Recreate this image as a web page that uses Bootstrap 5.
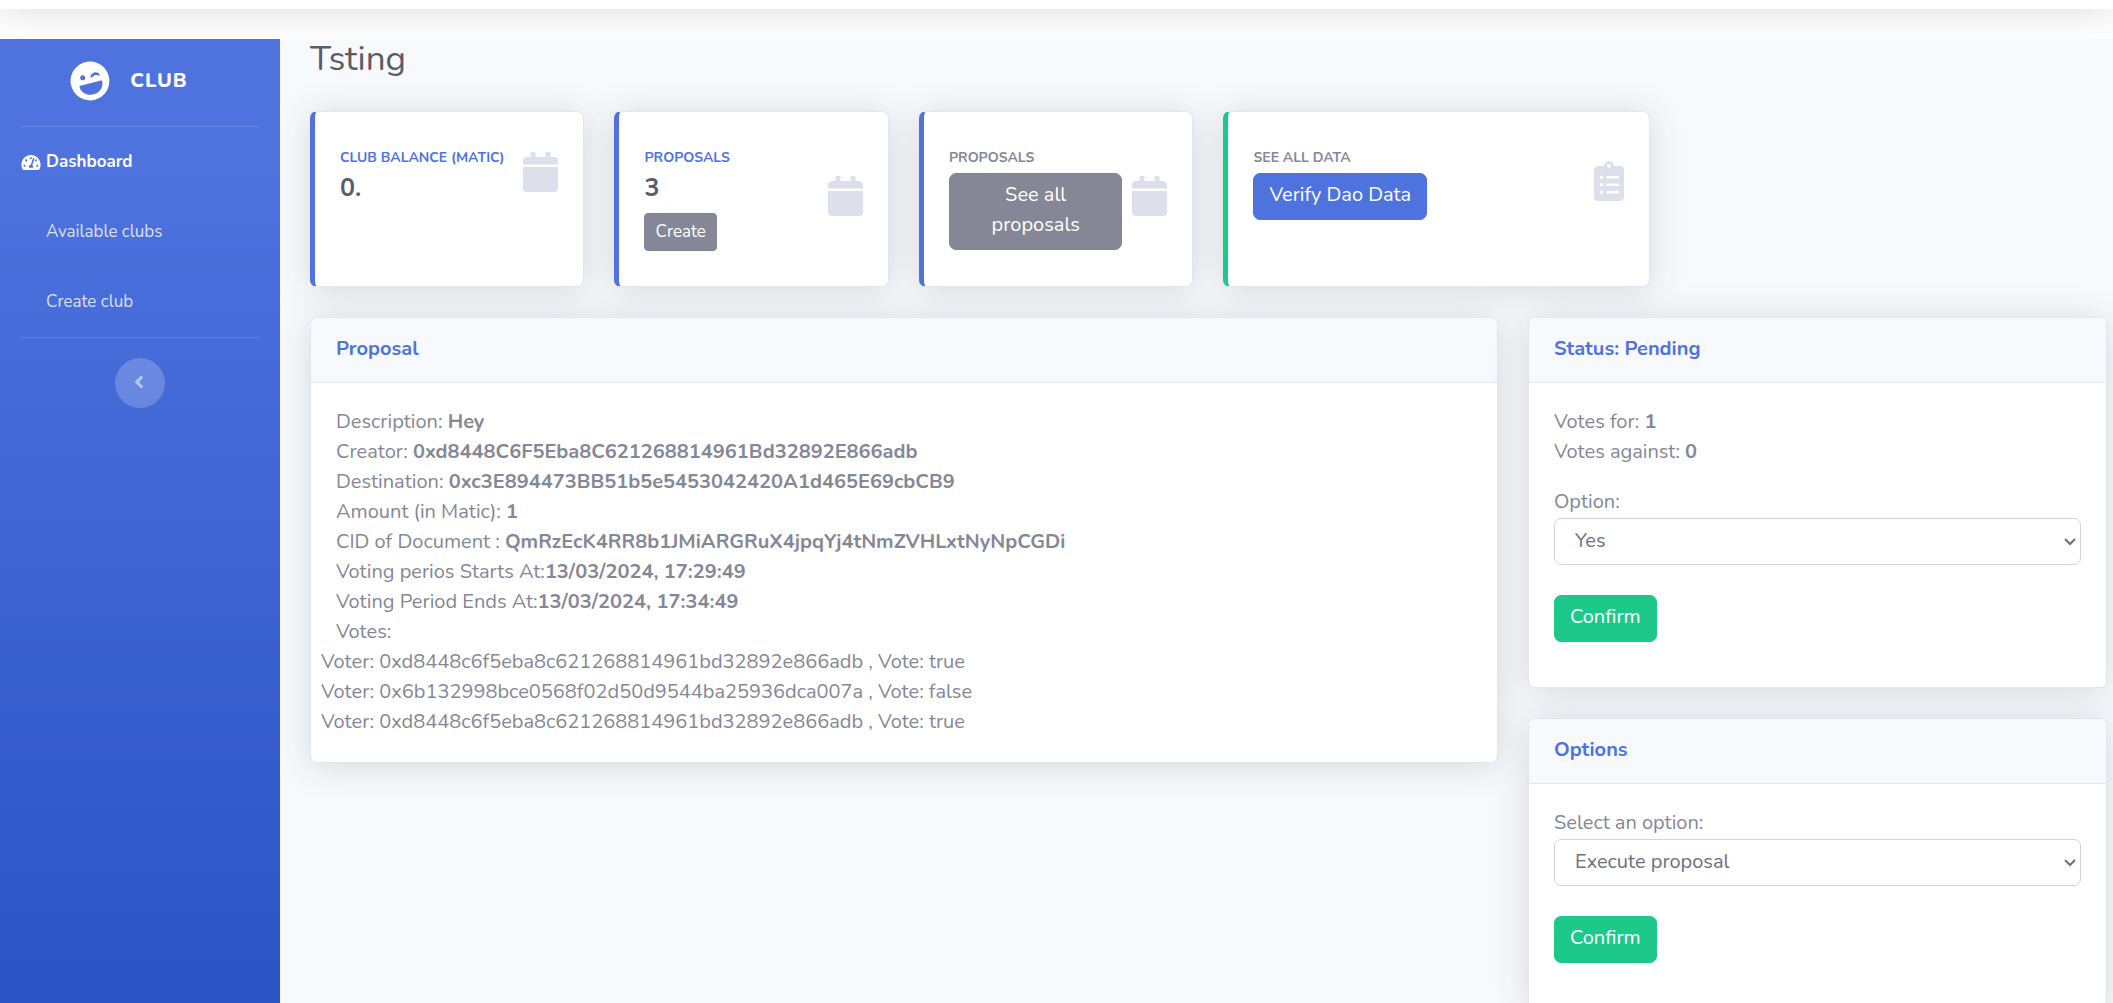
<!DOCTYPE html>
<html lang="en">
<head>
<meta charset="utf-8">
<meta name="viewport" content="width=device-width, initial-scale=1">
<title>Club - Proposal</title>
<link href="https://cdn.jsdelivr.net/npm/bootstrap@5.3.0/dist/css/bootstrap.min.css" rel="stylesheet">
<style>
:root { font-size: 20px; }
body { font-family: Nunito, Lato, "Open Sans", sans-serif; color: #858796; background: #fff; }
.soft-shadow { box-shadow: 0 3px 35px rgba(58, 59, 69, .17); }
.topbar { height: 87px; margin-top: -78px; background: #fff; flex: none; }
.page-wrap { background: #f8f9fc; min-height: 0; position: relative; }
.sidebar { width: 280px; flex: none; background: linear-gradient(180deg, #4e73df 10%, #224abe 100%); height: 1200px; }
.brand { height: 87px; padding: 0 2px 4px 0; color: #fff; font-weight: 800; letter-spacing: 1px; text-decoration: none; }
.brand svg { width: 40px; height: 40px; transform: rotate(-15deg); }
.divider { margin: 0 20px; border-top: 1px solid rgba(255, 255, 255, .15); opacity: 1; }
.side-link { display: flex; align-items: center; height: 70px; padding: 0 20px; font-size: 17px; color: rgba(255, 255, 255, .8); text-decoration: none; }
.side-link.active { color: #fff; font-weight: 700; }
.side-icon { width: 21px; margin-right: 5px; display: flex; justify-content: center; }
.side-icon svg { width: 20px; height: 17px; }
.toggler { width: 50px; height: 50px; border: 0; border-radius: 50%; background: rgba(255, 255, 255, .2); color: rgba(255, 255, 255, .5); padding: 0 2px 4px 0; }
.toggler svg { width: 10px; height: 20px; }
.content { min-width: 0; overflow: hidden; }
.content-inner { padding: 0 6px 0 30px; }
.page-title { font-size: 35px; line-height: 40px; margin-bottom: 32px; color: #5a5c69; font-weight: 400; }
.card { border-color: #e3e6f0; border-radius: 7px; color: inherit; }
.card-body { padding: 25px; }
.panel-body { padding: 24px 25px 25px; }
.card-header { padding: 19px 25px 21px; background: #f8f9fc; border-color: #e3e6f0; }
.card-header:first-child { border-radius: 6px 6px 0 0; }
.panel-title { font-size: 20px; line-height: 24px; font-weight: 700; color: #4e73df; margin: 0; }
.edge-blue { border-left: 5px solid #4e73df; }
.edge-green { border-left: 5px solid #1cc88a; }
.stat-label { font-size: 14px; line-height: 21px; font-weight: 700; text-transform: uppercase; }
.stat-value { font-size: 25px; line-height: 30px; font-weight: 700; color: #5a5c69; }
.text-blue { color: #4e73df; }
.stat-icon { color: #dddfeb; padding-bottom: 6px; }
.stat-icon svg { display: block; height: 40px; }
.btn { border-radius: 7px; padding: 6px 15px 9px; }
.btn-sm { border-radius: 4px; font-size: 17px; line-height: 26px; padding: 5px 10px; }
.btn-grey, .btn-grey:hover { background: #858796; border-color: #858796; color: #fff; }
.btn-blue, .btn-blue:hover { background: #4e73df; border-color: #4e73df; color: #fff; }
.btn-green, .btn-green:hover { background: #1cc88a; border-color: #1cc88a; color: #fff; }
.field-label { display: block; padding-bottom: 1px; }
select.form-control { height: 47px; border-color: #d1d3e2; border-radius: 7px; color: #6e707e; padding: 6px 25px 8px 20px;
  background: #fff url("data:image/svg+xml,%3Csvg xmlns='http://www.w3.org/2000/svg' viewBox='0 0 12 8'%3E%3Cpath d='M1 1l5 5 5-5' fill='none' stroke='%236e707e' stroke-width='2'/%3E%3C/svg%3E") no-repeat right 4px center / 12px 8px; }
.voters { margin-left: -15px; }
</style>
</head>
<body class="vh-100 overflow-hidden d-flex flex-column">
<svg class="d-none" xmlns="http://www.w3.org/2000/svg">
  <symbol id="i-calendar" viewBox="0 0 448 512"><path fill="currentColor" d="M12 192h424c6.600 0 12 5.400 12 12v260c0 26.500-21.500 48-48 48H48c-26.500 0-48-21.500-48-48V204c0-6.600 5.400-12 12-12zm436-44v-36c0-26.500-21.500-48-48-48h-48V12c0-6.600-5.400-12-12-12h-40c-6.600 0-12 5.400-12 12v52H160V12c0-6.600-5.400-12-12-12h-40c-6.600 0-12 5.400-12 12v52H48C21.500 64 0 85.500 0 112v36c0 6.600 5.400 12 12 12h424c6.600 0 12-5.400 12-12z"/></symbol>
</svg>

<nav class="topbar soft-shadow mb-4" aria-label="Top bar"></nav>

<div class="page-wrap d-flex flex-grow-1 overflow-hidden">
  <aside class="sidebar">
    <a class="brand d-flex align-items-center justify-content-center" href="#">
      <svg viewBox="0 0 496 512"><path fill="currentColor" d="M248 8C111 8 0 119 0 256s111 248 248 248 248-111 248-248S385 8 248 8zm20.100 198.100c4-25.200 34.200-42.100 59.900-42.100s55.900 16.900 59.900 42.100c1.700 11.100-11.400 18.300-19.800 10.800l-9.500-8.500c-14.800-13.200-46.200-13.200-61 0L288 217c-8.400 7.400-21.600.3-19.900-10.900zM168 160c17.700 0 32 14.300 32 32s-14.300 32-32 32-32-14.300-32-32 14.300-32 32-32zm230.900 142.500C388.800 383.100 325.200 432 257.500 432h-19c-67.700 0-132.600-48.900-141-129.500-1-9.500 6.500-18.500 16-18.500h269c9.500 0 16.900 8.200 16.400 18.500z"/></svg>
      <span class="mx-3">CLUB</span>
    </a>
    <hr class="divider">
    <nav>
      <a class="side-link active" href="#"><span class="side-icon"><svg viewBox="0 0 576 512"><path fill="currentColor" d="M288 32C128.940 32 0 160.940 0 320c0 52.800 14.250 102.260 39.060 144.800 5.610 9.620 16.300 15.200 27.440 15.200h443c11.140 0 21.830-5.580 27.440-15.200C561.750 422.260 576 372.800 576 320c0-159.060-128.940-288-288-288zm0 64c14.710 0 26.580 10.130 30.320 23.650-1.110 2.260-2.640 4.230-3.450 6.670l-9.220 27.670c-5.130 3.490-10.970 6.010-17.640 6.010-17.670 0-32-14.330-32-32S270.330 96 288 96zM96 384c-17.670 0-32-14.330-32-32s14.330-32 32-32 32 14.330 32 32-14.330 32-32 32zm48-160c-17.670 0-32-14.330-32-32s14.330-32 32-32 32 14.330 32 32-14.330 32-32 32zm246.770-72.410l-61.330 184C343.130 347.330 352 364.540 352 384c0 11.720-3.380 22.550-8.880 32H232.880c-5.500-9.450-8.880-20.280-8.880-32 0-33.940 26.500-61.430 59.900-63.590l61.340-184.010c4.170-12.560 17.730-19.450 30.360-15.170 12.570 4.190 19.350 17.790 15.170 30.360zm14.660 57.200l15.520-46.550c3.470-1.290 7.130-2.230 11.050-2.230 17.670 0 32 14.330 32 32s-14.330 32-32 32c-11.380-.01-21.250-6.100-26.570-15.220zM480 384c-17.670 0-32-14.330-32-32s14.330-32 32-32 32 14.330 32 32-14.330 32-32 32z"/></svg></span>Dashboard</a>
      <a class="side-link" href="#"><span class="side-icon"></span>Available clubs</a>
      <a class="side-link" href="#"><span class="side-icon"></span>Create club</a>
    </nav>
    <hr class="divider">
    <div class="text-center mt-3">
      <button class="toggler" type="button" aria-label="Collapse sidebar"><svg viewBox="0 0 256 512"><path fill="currentColor" d="M31.700 239l136-136c9.400-9.400 24.600-9.400 33.900 0l22.600 22.600c9.400 9.400 9.400 24.600 0 33.900L127.900 256l96.400 96.400c9.400 9.400 9.400 24.600 0 33.900L201.700 409c-9.400 9.400-24.600 9.400-33.900 0l-136-136c-9.500-9.400-9.500-24.600-.1-34z"/></svg></button>
    </div>
  </aside>

  <main class="content flex-grow-1">
    <div class="content-inner">
      <h1 class="page-title">Tsting</h1>

      <div class="row">
        <div class="col-xl-2 col-md-6 mb-4">
          <div class="card edge-blue soft-shadow h-100 py-2"><div class="card-body">
            <div class="d-flex align-items-center">
              <div class="flex-grow-1 me-2">
                <div class="stat-label text-blue mb-1 text-nowrap">Club balance (Matic)</div>
                <div class="stat-value">0.</div>
              </div>
              <div class="stat-icon"><svg width="35"><use href="#i-calendar"/></svg></div>
            </div>
          </div></div>
        </div>
        <div class="col-xl-2 col-md-6 mb-4">
          <div class="card edge-blue soft-shadow h-100 py-2"><div class="card-body">
            <div class="d-flex align-items-center">
              <div class="flex-grow-1 me-2">
                <div class="stat-label text-blue mb-1">Proposals</div>
                <div class="stat-value mb-2">3</div>
                <button class="btn btn-sm btn-grey d-block" type="button">Create</button>
              </div>
              <div class="stat-icon"><svg width="35"><use href="#i-calendar"/></svg></div>
            </div>
          </div></div>
        </div>
        <div class="col-xl-2 col-md-6 mb-4">
          <div class="card edge-blue soft-shadow h-100 py-2"><div class="card-body">
            <div class="d-flex align-items-center">
              <div class="flex-grow-1 me-2">
                <div class="stat-label mb-1">Proposals</div>
                <a class="btn btn-grey d-block" href="#">See all proposals</a>
              </div>
              <div class="stat-icon"><svg width="35"><use href="#i-calendar"/></svg></div>
            </div>
          </div></div>
        </div>
        <div class="col-xl-3 col-md-6 mb-4">
          <div class="card edge-green soft-shadow h-100 py-2"><div class="card-body">
            <div class="d-flex align-items-center">
              <div class="flex-grow-1 me-2">
                <div class="stat-label mb-1">See all data</div>
                <a class="btn btn-blue" href="#">Verify Dao Data</a>
              </div>
              <div class="stat-icon"><svg width="30" viewBox="0 0 384 512"><path fill="currentColor" d="M336 64h-80c0-35.300-28.700-64-64-64s-64 28.700-64 64H48C21.500 64 0 85.500 0 112v352c0 26.500 21.500 48 48 48h288c26.500 0 48-21.500 48-48V112c0-26.500-21.500-48-48-48zM96 424c-13.300 0-24-10.700-24-24s10.700-24 24-24 24 10.700 24 24-10.700 24-24 24zm0-96c-13.300 0-24-10.700-24-24s10.700-24 24-24 24 10.700 24 24-10.700 24-24 24zm0-96c-13.300 0-24-10.700-24-24s10.700-24 24-24 24 10.700 24 24-10.700 24-24 24zm96-192c13.300 0 24 10.700 24 24s-10.700 24-24 24-24-10.700-24-24 10.700-24 24-24zm128 368c0 4.400-3.600 8-8 8H168c-4.400 0-8-3.600-8-8v-16c0-4.400 3.600-8 8-8h144c4.400 0 8 3.600 8 8v16zm0-96c0 4.400-3.600 8-8 8H168c-4.400 0-8-3.600-8-8v-16c0-4.400 3.600-8 8-8h144c4.400 0 8 3.600 8 8v16zm0-96c0 4.400-3.600 8-8 8H168c-4.400 0-8-3.600-8-8v-16c0-4.400 3.600-8 8-8h144c4.400 0 8 3.600 8 8v16z"/></svg></div>
            </div>
          </div></div>
        </div>
      </div>

      <div class="row">
        <div class="col-lg-8">
          <div class="card soft-shadow mb-4">
            <div class="card-header"><h6 class="panel-title">Proposal</h6></div>
            <div class="card-body panel-body">
              <div>Description: <b>Hey</b></div>
              <div>Creator: <b>0xd8448C6F5Eba8C621268814961Bd32892E866adb</b></div>
              <div>Destination: <b>0xc3E894473BB51b5e5453042420A1d465E69cbCB9</b></div>
              <div>Amount (in Matic): <b>1</b></div>
              <div>CID of Document : <b>QmRzEcK4RR8b1JMiARGRuX4jpqYj4tNmZVHLxtNyNpCGDi</b></div>
              <div>Voting perios Starts At:<b>13/03/2024, 17:29:49</b></div>
              <div>Voting Period Ends At:<b>13/03/2024, 17:34:49</b></div>
              <div>Votes:</div>
              <div class="voters">
                <div>Voter: 0xd8448c6f5eba8c621268814961bd32892e866adb , Vote: true</div>
                <div>Voter: 0x6b132998bce0568f02d50d9544ba25936dca007a , Vote: false</div>
                <div>Voter: 0xd8448c6f5eba8c621268814961bd32892e866adb , Vote: true</div>
              </div>
            </div>
          </div>
        </div>
        <div class="col-lg-4">
          <div class="card soft-shadow mb-4">
            <div class="card-header"><h6 class="panel-title">Status: Pending</h6></div>
            <form class="card-body panel-body">
              <div>Votes for: <b>1</b></div>
              <div class="mb-3">Votes against: <b>0</b></div>
              <label class="field-label" for="vote">Option:</label>
              <select class="form-control mb-4" id="vote"><option>Yes</option><option>No</option></select>
              <button class="btn btn-green d-block mb-3" type="button">Confirm</button>
            </form>
          </div>
          <div class="card soft-shadow mb-4">
            <div class="card-header"><h6 class="panel-title">Options</h6></div>
            <form class="card-body panel-body">
              <label class="field-label" for="action">Select an option:</label>
              <select class="form-control mb-4" id="action"><option>Execute proposal</option></select>
              <button class="btn btn-green d-block mb-3" type="button">Confirm</button>
            </form>
          </div>
        </div>
      </div>
    </div>
  </main>
</div>
<script src="https://cdn.jsdelivr.net/npm/bootstrap@5.3.0/dist/js/bootstrap.bundle.min.js"></script>
</body>
</html>
